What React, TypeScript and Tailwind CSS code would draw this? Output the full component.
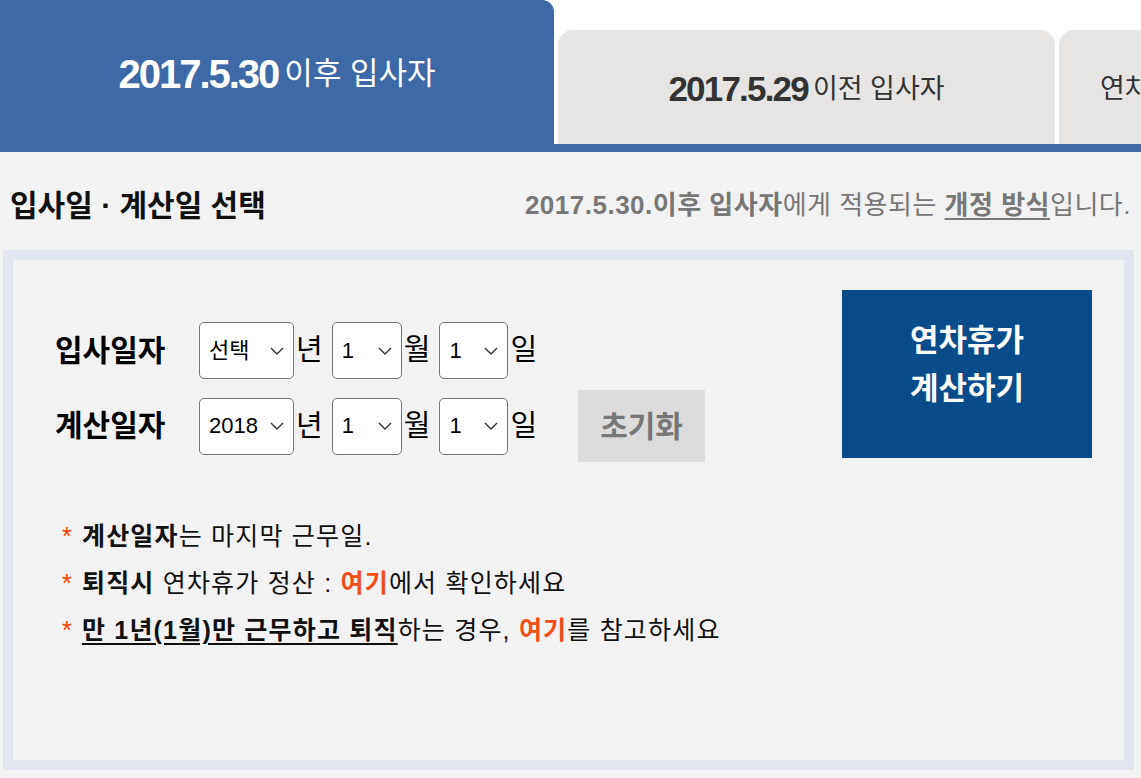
import React from "react"

const FONT = "font-['Liberation_Sans','Noto_Sans_CJK_KR',sans-serif]"

function Chevron() {
  return (
    <svg width="14" height="8" viewBox="0 0 14 8" fill="none" className="shrink-0">
      <path d="M1 1l6 6 6-6" stroke="#333" strokeWidth="1.4" />
    </svg>
  )
}

// looks like a native dropdown: value on the left, chevron on the right
function Pick({ value, width }: { value: string; width: string }) {
  return (
    <div
      className={`flex h-[57px] shrink-0 items-center justify-between rounded-[5px] border-[1.5px] border-[#767676] bg-white pl-[9px] pr-[9px] ${width}`}
    >
      <span className="text-[22px] leading-none text-black">{value}</span>
      <Chevron />
    </div>
  )
}

function Unit({ children }: { children: React.ReactNode }) {
  return <span className="ml-[2px] mr-[9px] text-[29px] leading-none text-black">{children}</span>
}

function DateRow({ label, year, extra }: { label: string; year: string; extra?: React.ReactNode }) {
  return (
    <div className="flex items-center">
      <span className="w-[144px] text-[30px] font-bold leading-none text-black">{label}</span>
      <Pick value={year} width="w-[95px]" />
      <Unit>년</Unit>
      <Pick value="1" width="w-[70px]" />
      <Unit>월</Unit>
      <Pick value="1" width="w-[69px]" />
      <span className="ml-[2px] text-[29px] leading-none text-black">일</span>
      {extra}
    </div>
  )
}

export default function App() {
  return (
    <div className={`h-[778px] w-[1141px] overflow-hidden bg-white ${FONT}`}>
      {/* tabs */}
      <div className="flex h-[144px] items-end gap-[4px]">
        <div className="flex h-[144px] w-[554px] shrink-0 items-center justify-center rounded-tr-[12px] bg-[#3d69a6] pt-[4px] text-white">
          <span className="text-[40px] font-bold tracking-[-2px]">2017.5.30</span>
          <span className="ml-[6px] text-[31px]">이후 입사자</span>
        </div>
        <div className="flex h-[114px] w-[497px] shrink-0 items-center justify-center rounded-t-[15px] bg-[#e6e5e3] pt-[4px] text-[#333]">
          <span className="text-[35px] font-bold tracking-[-1.8px]">2017.5.29</span>
          <span className="ml-[5px] text-[27px]">이전 입사자</span>
        </div>
        <div className="flex h-[114px] w-[300px] shrink-0 items-center rounded-t-[15px] bg-[#e6e5e3] pl-[41px] pt-[4px] text-[#333]">
          <span className="text-[27px]">연차수당</span>
        </div>
      </div>
      <div className="h-[8px] bg-[#3d69a6]" />

      <div className="h-[626px] bg-[#f2f2f2] pl-[3px] pr-[7px]">
        {/* section header */}
        <div className="flex h-[98px] items-center justify-between pl-[7px] pr-[3px] pt-[8px]">
          <h2 className="text-[30px] font-bold text-[#111]">입사일 · 계산일 선택</h2>
          <p className="text-[26px] tracking-[0.5px] text-[#777]">
            <b>2017.5.30.이후 입사자</b>에게 적용되는{" "}
            <b className="underline decoration-2 underline-offset-[4px]">개정 방식</b>입니다.
          </p>
        </div>

        {/* form box */}
        <div className="flex h-[520px] items-start justify-between border-[10px] border-[#e1e5f0] pl-[42px] pr-[32px]">
          <div className="pt-[62px]">
            <div className="flex flex-col gap-[11px]">
              <DateRow label="입사일자" year="선택" />
              <DateRow
                label="계산일자"
                year="2018"
                extra={
                  <button className="ml-[41px] flex h-[72px] w-[127px] items-center justify-center bg-[#dcdcdc] text-[30px] font-bold text-[#777]">
                    초기화
                  </button>
                }
              />
            </div>

            <ul className="mt-[51px] pl-[7px] text-[25px] leading-[47px] tracking-[1.2px] text-[#111]">
              <li>
                <span className="mr-[9px] text-[#ff3c00]">*</span>
                <b>계산일자</b>는 마지막 근무일.
              </li>
              <li>
                <span className="mr-[9px] text-[#ff3c00]">*</span>
                <b>퇴직시</b> 연차휴가 정산 : <b className="text-[#f04e17]">여기</b>에서 확인하세요
              </li>
              <li>
                <span className="mr-[9px] text-[#ff3c00]">*</span>
                <b className="underline decoration-2 underline-offset-[4px]">만 1년(1월)만 근무하고 퇴직</b>하는 경우,{" "}
                <b className="text-[#f04e17]">여기</b>를 참고하세요
              </li>
            </ul>
          </div>

          <div className="pt-[30px]">
            <button className="flex h-[168px] w-[250px] flex-col items-center justify-center bg-[#0a4c8a] pb-[18px] text-[31px] font-bold leading-[48px] text-white">
              <span>연차휴가</span>
              <span>계산하기</span>
            </button>
          </div>
        </div>
      </div>
    </div>
  )
}
